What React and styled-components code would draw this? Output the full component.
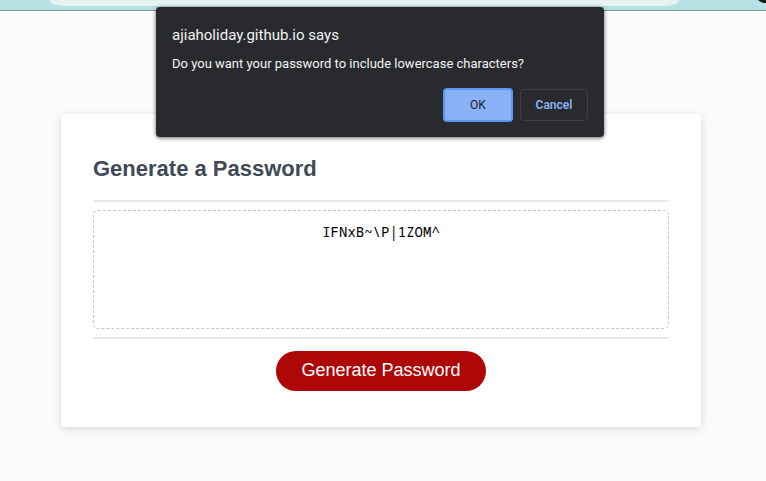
import React, { useState } from "react";
import styled, { createGlobalStyle } from "styled-components";

const GlobalStyle = createGlobalStyle`
  *, *::before, *::after { box-sizing: border-box; }
  body {
    margin: 0;
    background: #fafbfd;
    font-family: "Liberation Sans", Arial, sans-serif;
  }
`;

const Page = styled.div`
  position: relative;
  min-height: 100vh;
`;

const BrowserBar = styled.header`
  display: flex;
  height: 11px;
  padding: 0 87px 0 50px;
  overflow: hidden;
  background: #b7e1e4;
  border-bottom: 1px solid #7c9ca2;
`;

const AddressField = styled.div`
  flex: 1;
  height: 6px;
  background: #e6f3f3;
  border-radius: 0 0 14px 14px / 0 0 6px 6px;
`;

const Avatar = styled.svg`
  position: absolute;
  top: 0;
  right: 0;
  width: 8px;
  height: 4px;
`;

const Main = styled.main`
  padding: 103px 65px 54px 61px;
`;

const Card = styled.section`
  max-width: 640px;
  margin: 0 auto;
  padding: 32px;
  background: #fff;
  border-radius: 4px;
  box-shadow: 0 2px 8px rgba(0, 0, 0, 0.15);
`;

const CardTitle = styled.h2`
  margin: 0;
  padding: 8px 0 16px;
  color: #3f4a56;
  font-size: 22px;
  line-height: 30px;
`;

const CardBody = styled.div`
  display: flex;
  padding: 8px 0;
  border-top: 2px solid #e8e8e8;
  border-bottom: 2px solid #e8e8e8;
`;

const PasswordBox = styled.textarea`
  flex: 1;
  min-width: 0;
  height: 119px;
  padding: 11px 10px;
  color: #000;
  background: transparent;
  border: 1px dashed #c3c8d0;
  border-radius: 5px;
  font-family: "Noto Sans Mono", "DejaVu Sans Mono", monospace;
  font-size: 14px;
  line-height: 20px;
  text-align: center;
  resize: none;
  outline: none;
`;

const CardFooter = styled.div`
  display: flex;
  justify-content: center;
  padding: 12px 0 4px;
`;

const GenerateButton = styled.button`
  height: 40px;
  padding: 0 25px 2px;
  color: #fff;
  background: #ae0707;
  border: 0;
  border-radius: 20px;
  font-family: inherit;
  font-size: 18px;
  line-height: 24px;
  cursor: pointer;
`;

const Dialog = styled.div`
  position: absolute;
  top: 7px;
  left: 50%;
  width: 448px;
  max-width: 100%;
  transform: translateX(-227px);
  padding: 18px 16px 15px;
  color: #f1f3f4;
  background: #292a2d;
  border-radius: 4px;
  box-shadow: 0 1px 4px rgba(0, 0, 0, 0.6);
  font-family: Roboto, "Open Sans", sans-serif;
`;

const DialogTitle = styled.h1`
  margin: 0;
  font-size: 15px;
  font-weight: 400;
  line-height: 20px;
`;

const DialogMessage = styled.p`
  margin: 9px 0 14px;
  font-size: 13px;
  line-height: 20px;
`;

const DialogActions = styled.div`
  display: flex;
  align-items: center;
  justify-content: flex-end;
  gap: 7px;
`;

const DialogButton = styled.button`
  width: ${({ $primary }) => ($primary ? "70px" : "68px")};
  height: ${({ $primary }) => ($primary ? "34px" : "32px")};
  padding: 0;
  color: ${({ $primary }) => ($primary ? "#202124" : "#8ab4f8")};
  background: ${({ $primary }) => ($primary ? "#8ab0f6" : "transparent")};
  border: ${({ $primary }) => ($primary ? "2px solid #5e97f3" : "1px solid #3c4043")};
  border-radius: 4px;
  font-family: inherit;
  font-size: 12px;
  font-weight: ${({ $primary }) => ($primary ? 400 : 600)};
  line-height: 16px;
  cursor: pointer;
`;

export default function App() {
  const [password, setPassword] = useState("IFNxB~\\P|1ZOM^");

  return (
    <Page>
      <GlobalStyle />
      <BrowserBar>
        <AddressField />
        <Avatar viewBox="0 0 8 4" aria-hidden="true">
          <path d="M0 0C2 2 5 3 8 3V0Z" fill="#0d1d18" />
        </Avatar>
      </BrowserBar>
      <Main>
        <Card>
          <CardTitle>Generate a Password</CardTitle>
          <CardBody>
            <PasswordBox
              aria-label="Generated password"
              spellCheck={false}
              value={password}
              onChange={(event) => setPassword(event.target.value)}
            />
          </CardBody>
          <CardFooter>
            <GenerateButton type="button">Generate Password</GenerateButton>
          </CardFooter>
        </Card>
      </Main>
      <Dialog role="dialog" aria-labelledby="dialog-title" aria-describedby="dialog-message">
        <DialogTitle id="dialog-title">ajiaholiday.github.io says</DialogTitle>
        <DialogMessage id="dialog-message">
          Do you want your password to include lowercase characters?
        </DialogMessage>
        <DialogActions>
          <DialogButton type="button" $primary>OK</DialogButton>
          <DialogButton type="button">Cancel</DialogButton>
        </DialogActions>
      </Dialog>
    </Page>
  );
}
